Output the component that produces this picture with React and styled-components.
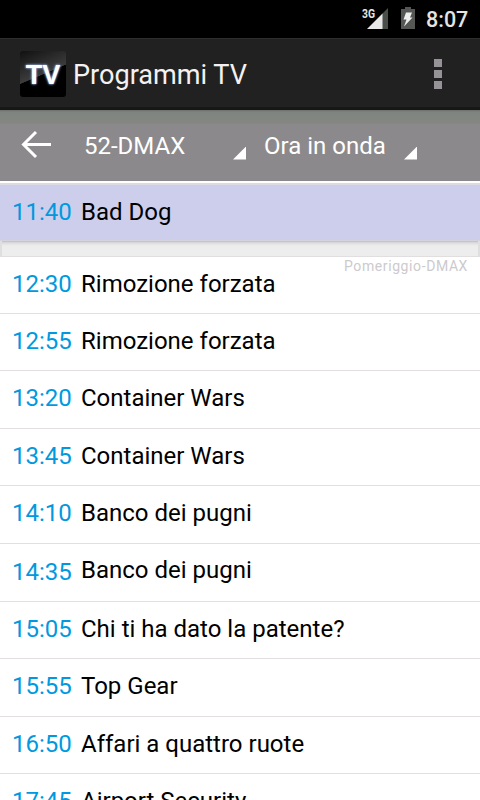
import React from "react";
import styled, { createGlobalStyle } from "styled-components";

const GlobalStyle = createGlobalStyle`
  * { box-sizing: border-box; }
  body { margin: 0; background: #fff; overflow: hidden; }
`;

const Screen = styled.div`
  width: 480px;
  height: 800px;
  overflow: hidden;
  display: flex;
  flex-direction: column;
  background: #fff;
  font-family: Roboto, sans-serif;
  color: #000;
`;

const StatusBar = styled.header`
  flex: none;
  height: 38px;
  background: #000;
  display: flex;
  justify-content: flex-end;
  padding-right: 12px;
`;

const StatusIcons = styled.svg`
  width: 60px;
  height: 38px;
  margin-right: 8px;
`;

const NetworkLabel = styled.text`
  font: 700 12px Roboto, sans-serif;
  fill: #e4e4e4;
`;

const Clock = styled.time`
  font-size: 21.5px;
  font-weight: 500;
  line-height: 40px;
  color: #e4e4e4;
  width: 42px;
  white-space: nowrap;
`;

const ActionBar = styled.div`
  flex: none;
  height: 72px;
  background: #212121;
  border-top: 1px solid #2e2e2e;
  border-bottom: 3px solid #171717;
  display: flex;
  align-items: center;
  padding: 2px 38px 0 20px;
`;

const AppIcon = styled.div`
  width: 46px;
  height: 46px;
  border-radius: 3px;
  background: linear-gradient(157deg, #111 0%, #3c3c3c 50%, #000 51%);
  color: #fff;
  font: 700 27px/48px "Liberation Sans", sans-serif;
  text-align: center;
  text-shadow: 0 0 2px #9fb8e8, 0 0 3px #7f98c8;
`;

const AppTitle = styled.h1`
  margin: 0 0 0 7px;
  flex: 1;
  font-size: 27.1px;
  font-weight: 400;
  line-height: 46px;
  padding-top: 2px;
  color: #f5f1f3;
`;

const Overflow = styled.div`
  display: grid;
  gap: 3px;
`;

const Dot = styled.i`
  width: 8px;
  height: 8px;
  background: #969297;
`;

const Filters = styled.nav`
  flex: none;
  height: 71px;
  background: linear-gradient(#6d6e6d 0, #808480 2px, #848782 14px, #8c898c 14px);
  color: #fff;
  display: flex;
  padding: 14px 63px 0 21px;
`;

const BackArrow = styled.svg`
  width: 32px;
  height: 30px;
  margin: 6px 31px 0 0;
  fill: none;
  stroke: #fff;
  stroke-width: 3;
`;

const Spinner = styled.div`
  width: ${(p) => p.$width}px;
  height: 35.5px;
  margin-right: ${(p) => p.$gap || 0}px;
  display: flex;
  align-items: flex-end;
  justify-content: space-between;
  font-size: 24px;
  line-height: 29px;
  white-space: nowrap;
`;

const SpinnerLabel = styled.span`
  align-self: flex-start;
  margin-top: 8px;
`;

const Caret = styled.i`
  width: 13px;
  height: 13px;
  background: #fff;
  clip-path: polygon(100% 0, 100% 100%, 0 100%);
`;

const ListEdge = styled.div`
  flex: none;
  height: 4px;
  background: linear-gradient(#fff 0 2px, #dddbe2 2px 4px);
`;

const Row = styled.article`
  flex: none;
  height: ${(p) => p.$height}px;
  display: flex;
  align-items: flex-start;
  padding-left: 12px;
  font-size: 24px;
  line-height: 28px;
  white-space: nowrap;
  background: ${(p) => (p.$current ? "#cdceec" : "#fff")};
  border-bottom: 1px solid ${(p) => (p.$current ? "#d5d4de" : "#e1dfe0")};
`;

const Time = styled.time`
  width: 69px;
  color: #0099df;
  padding-top: ${(p) => p.$top}px;
`;

const Title = styled.span`
  flex: 1;
  padding-top: ${(p) => p.$top}px;
`;

const Period = styled.small`
  font-size: 14px;
  line-height: 18px;
  letter-spacing: 0.6px;
  color: #cdcacd;
  padding-right: 12px;
`;

const Gap = styled.div`
  flex: none;
  height: 16px;
  background: linear-gradient(#bebebe, #dedede 2px, #ededed 5px);
  border: solid #e0dede;
  border-width: 0 2px 1px;
`;

const programmes = [
  { time: "12:30", title: "Rimozione forzata", height: 57, period: "Pomeriggio-DMAX" },
  { time: "12:55", title: "Rimozione forzata", height: 57 },
  { time: "13:20", title: "Container Wars", height: 58 },
  { time: "13:45", title: "Container Wars", height: 57 },
  { time: "14:10", title: "Banco dei pugni", height: 58 },
  { time: "14:35", title: "Banco dei pugni", height: 58, top: 12, timeTop: 14 },
  { time: "15:05", title: "Chi ti ha dato la patente?", height: 57 },
  { time: "15:55", title: "Top Gear", height: 58 },
  { time: "16:50", title: "Affari a quattro ruote", height: 57 },
  { time: "17:45", title: "Airport Security", height: 58 },
];

function Programme({ time, title, height, period, current, top = 13, timeTop = top }) {
  return (
    <Row $current={current} $height={height}>
      <Time $top={timeTop}>{time}</Time>
      <Title $top={top}>{title}</Title>
      {period && <Period>{period}</Period>}
    </Row>
  );
}

export default function App() {
  return (
    <Screen>
      <GlobalStyle />
      <StatusBar>
        <StatusIcons viewBox="358 0 60 38">
          <NetworkLabel x="362" y="17.5" textLength="13" lengthAdjust="spacingAndGlyphs">3G</NetworkLabel>
          <path d="M388 8v21h-6V14z" fill="#4a4f4a" />
          <path d="M382.500 13.500V29H367z" fill="#e8e8e8" />
          <path d="M401 9h4V7h6v2h4v20h-14z" fill="#555755" />
          <path d="M406 12.500h6l-2 5h2.500l-8.500 9 2.500-7h-3z" fill="#eee" />
        </StatusIcons>
        <Clock>8:07</Clock>
      </StatusBar>
      <ActionBar>
        <AppIcon>TV</AppIcon>
        <AppTitle>Programmi TV</AppTitle>
        <Overflow><Dot /><Dot /><Dot /></Overflow>
      </ActionBar>
      <Filters>
        <BackArrow viewBox="0 0 32 30"><path d="M30 14.500H3M15 2L2.500 14.500 15 27" /></BackArrow>
        <Spinner $width={162} $gap={18}><SpinnerLabel>52-DMAX</SpinnerLabel><Caret /></Spinner>
        <Spinner $width={153}><SpinnerLabel>Ora in onda</SpinnerLabel><Caret /></Spinner>
      </Filters>
      <ListEdge />
      <Programme current time="11:40" title="Bad Dog" height={56} />
      <Gap />
      {programmes.map((programme) => (
        <Programme key={programme.time} {...programme} />
      ))}
    </Screen>
  );
}
